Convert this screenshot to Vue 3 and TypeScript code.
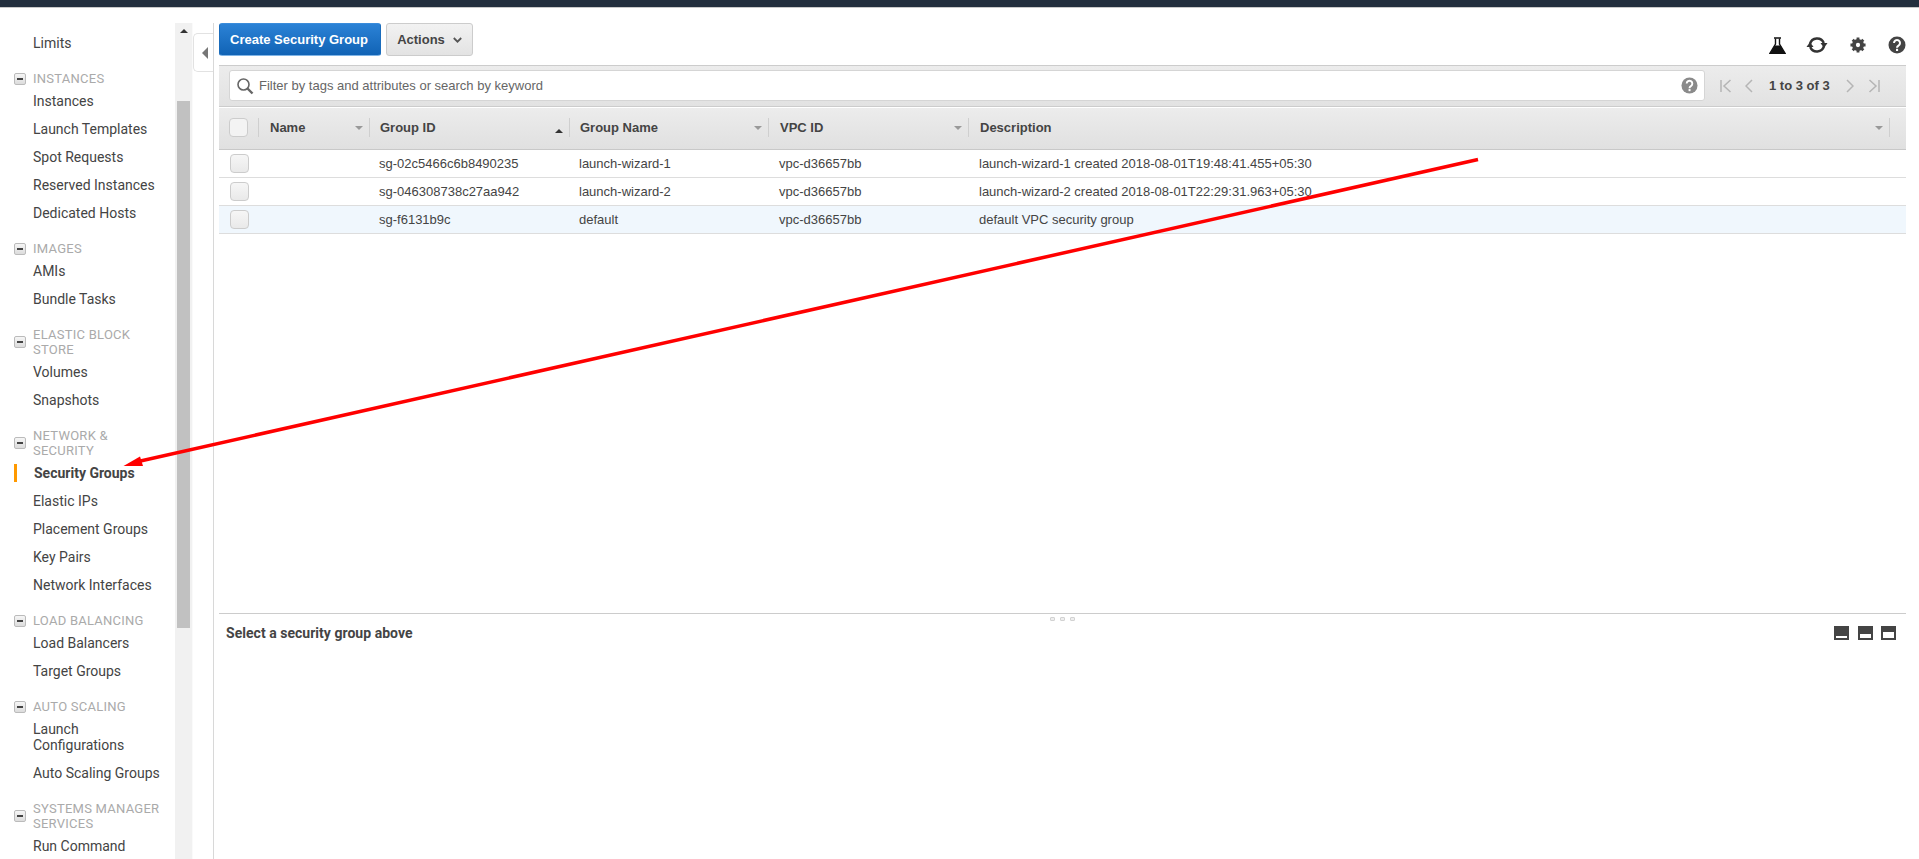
<script setup lang="ts">
interface NavItem { label: string; active?: boolean }
interface NavGroup { title?: string; items: NavItem[] }
const groups: NavGroup[] = [
  { items: [{ label: 'Limits' }] },
  { title: 'INSTANCES', items: ['Instances', 'Launch Templates', 'Spot Requests', 'Reserved Instances', 'Dedicated Hosts'].map(label => ({ label })) },
  { title: 'IMAGES', items: ['AMIs', 'Bundle Tasks'].map(label => ({ label })) },
  { title: 'ELASTIC BLOCK STORE', items: ['Volumes', 'Snapshots'].map(label => ({ label })) },
  { title: 'NETWORK & SECURITY', items: [{ label: 'Security Groups', active: true }, { label: 'Elastic IPs' }, { label: 'Placement Groups' }, { label: 'Key Pairs' }, { label: 'Network Interfaces' }] },
  { title: 'LOAD BALANCING', items: ['Load Balancers', 'Target Groups'].map(label => ({ label })) },
  { title: 'AUTO SCALING', items: ['Launch Configurations', 'Auto Scaling Groups'].map(label => ({ label })) },
  { title: 'SYSTEMS MANAGER SERVICES', items: ['Run Command'].map(label => ({ label })) },
]
const columns = [
  { label: 'Name', sort: 'down' },
  { label: 'Group ID', sort: 'up' },
  { label: 'Group Name', sort: 'down' },
  { label: 'VPC ID', sort: 'down' },
  { label: 'Description', sort: 'down' },
]
const rows = [
  { id: 'sg-02c5466c6b8490235', name: 'launch-wizard-1', vpc: 'vpc-d36657bb', desc: 'launch-wizard-1 created 2018-08-01T19:48:41.455+05:30' },
  { id: 'sg-046308738c27aa942', name: 'launch-wizard-2', vpc: 'vpc-d36657bb', desc: 'launch-wizard-2 created 2018-08-01T22:29:31.963+05:30' },
  { id: 'sg-f6131b9c', name: 'default', vpc: 'vpc-d36657bb', desc: 'default VPC security group', selected: true },
]
</script>

<template>
  <div class="app">
    <div class="topbar"></div>
    <div class="body">
      <nav class="nav">
        <div v-for="(g, i) in groups" :key="i" class="group">
          <div v-if="g.title" class="heading">
            <span class="minus"><i></i></span>
            <span class="heading-text">{{ g.title }}</span>
          </div>
          <a v-for="item in g.items" :key="item.label" class="item" :class="{ active: item.active }">{{ item.label }}</a>
        </div>
      </nav>
      <div class="track">
        <div class="up"></div>
        <div class="thumb"></div>
      </div>
      <div class="collapse-col">
        <div class="tab"><span class="tab-arrow"></span></div>
      </div>
      <main class="main">
        <div class="toolbar">
          <button class="btn primary">Create Security Group</button>
          <button class="btn secondary">Actions
            <svg class="chev" width="9" height="6" viewBox="0 0 9 6"><path d="M.8 1 4.500 4.700 8.200 1" fill="none" stroke="#555" stroke-width="1.800"/></svg>
          </button>
          <div class="tools">
            <svg class="flask" width="17" height="17" viewBox="0 0 17 17"><path d="M5 1h7" stroke="#111" stroke-width="1.500"/><path d="M6.500 1.500v5.500L1 16.200h15L10.500 7V1.500" fill="none" stroke="#111" stroke-width="1.400"/><path d="M5.500 8.500h6L16 16.500H1z" fill="#111"/></svg>
            <svg class="refresh" width="22" height="18" viewBox="0 0 22 18"><path d="M4 8A7.300 7.300 0 0 1 17.800 7" fill="none" stroke="#333" stroke-width="2.500"/><path d="M14.500 7h7L18 12z" fill="#333"/><path d="M18 10A7.300 7.300 0 0 1 4.200 11" fill="none" stroke="#333" stroke-width="2.500"/><path d="M7.500 11h-7L4 6z" fill="#333"/></svg>
            <svg class="gear" width="16" height="16" viewBox="0 0 18 18"><circle cx="9" cy="9" r="5" fill="none" stroke="#444" stroke-width="3.600"/><path d="M9 .5v17M.5 9h17M3 3l12 12M15 3 3 15" stroke="#444" stroke-width="3.200"/><circle cx="9" cy="9" r="2.400" fill="#fff"/></svg>
            <svg class="help" width="18" height="18" viewBox="0 0 18 18"><circle cx="9" cy="9" r="8.500" fill="#444"/><path d="M6 7a3 3 0 1 1 4.500 2.600C9.500 10.200 9 10.800 9 11.800" fill="none" stroke="#fff" stroke-width="2"/><rect x="8" y="12.800" width="2.100" height="2.200" fill="#fff"/></svg>
          </div>
        </div>
        <div class="filterbar">
          <div class="search">
            <svg width="18" height="18" viewBox="0 0 18 18"><circle cx="7.500" cy="7.500" r="5.500" fill="none" stroke="#666" stroke-width="1.600"/><path d="M11.500 11.500 16.500 16.500" stroke="#666" stroke-width="2.400"/></svg>
            <span class="placeholder">Filter by tags and attributes or search by keyword</span>
            <svg width="17" height="17" viewBox="0 0 18 18"><circle cx="9" cy="9" r="8.500" fill="#8a8a8a"/><path d="M6 7a3 3 0 1 1 4.500 2.600C9.500 10.200 9 10.800 9 11.800" fill="none" stroke="#fff" stroke-width="2"/><rect x="8" y="12.800" width="2.100" height="2.200" fill="#fff"/></svg>
          </div>
          <div class="pager">
            <svg width="12" height="14" viewBox="0 0 12 14"><path d="M1 1v12M10.500 1 4 7l6.500 6" fill="none" stroke="#b5b5b5" stroke-width="1.500"/></svg>
            <svg width="8" height="14" viewBox="0 0 8 14"><path d="M7 1 1 7l6 6" fill="none" stroke="#b5b5b5" stroke-width="1.500"/></svg>
            <span class="count">1 to 3 of 3</span>
            <svg width="8" height="14" viewBox="0 0 8 14"><path d="M1 1l6 6-6 6" fill="none" stroke="#b5b5b5" stroke-width="1.500"/></svg>
            <svg width="12" height="14" viewBox="0 0 12 14"><path d="M11 1v12M1.500 1 8 7l-6.500 6" fill="none" stroke="#b5b5b5" stroke-width="1.500"/></svg>
          </div>
        </div>
        <div class="table">
          <div class="thead grid">
            <div class="cell-check"><span class="check head-check"></span></div>
            <div v-for="c in columns" :key="c.label" class="th">
              <span>{{ c.label }}</span>
              <span class="sort" :class="c.sort"></span>
            </div>
            <div class="th tail"></div>
          </div>
          <div v-for="r in rows" :key="r.id" class="tr grid" :class="{ selected: r.selected }">
            <div class="cell-check"><span class="check"></span></div>
            <div class="td"></div>
            <div class="td">{{ r.id }}</div>
            <div class="td">{{ r.name }}</div>
            <div class="td">{{ r.vpc }}</div>
            <div class="td">{{ r.desc }}</div>
            <div></div>
          </div>
        </div>
        <div class="detail">
          <div class="dots"><i></i><i></i><i></i></div>
          <div class="detail-head">
            <span class="detail-title">Select a security group above</span>
            <div class="panes">
              <span class="pane p1"><i></i></span>
              <span class="pane p2"><i></i></span>
              <span class="pane p3"><i></i></span>
            </div>
          </div>
        </div>
      </main>
    </div>
    <svg class="annot" width="1919" height="859" viewBox="0 0 1919 859">
      <path d="M1478 159.500 136 462" stroke="#f00" stroke-width="3.500" fill="none"/>
      <path d="M123.500 466 140 456.500 143 466z" fill="#f00"/>
    </svg>
  </div>
</template>

<style>
html, body { margin: 0; padding: 0; overflow: hidden; background: #fff; }
</style>

<style scoped>
.app { position: relative; width: 1919px; height: 859px; overflow: hidden; display: flex; flex-direction: column; background: #fff; font-family: "Liberation Sans", Arial, sans-serif; }
.topbar { height: 7px; flex: none; background: #232f3e; border-bottom: 1px solid #c9c9c9; }
.body { flex: 1; display: flex; min-height: 0; }

.nav { width: 175px; flex: none; padding-top: 21px; box-sizing: border-box; overflow: hidden; font-family: Roboto, sans-serif; }
.heading { position: relative; box-sizing: border-box; padding: 14px 14px 1px 33px; display: flex; align-items: center; }
.heading-text { font-size: 13px; line-height: 15px; color: #aaa; letter-spacing: 0.25px; }
.minus { position: absolute; left: 14px; top: calc(50% + 6.5px); transform: translateY(-50%); width: 10px; height: 10px; border: 1px solid #bbb; border-radius: 2px; background: linear-gradient(#f6f6f6, #dcdcdc); display: flex; align-items: center; justify-content: center; }
.minus i { width: 6px; height: 2px; background: #444; display: block; }
.item { display: block; position: relative; padding: 6px 14px 6px 33px; font-size: 14px; line-height: 16px; color: #444; }
.item.active { font-weight: 700; padding-left: 34px; color: #444; }
.item.active::before { content: ""; position: absolute; left: 14px; top: 5px; width: 3px; height: 18px; background: #f90; }

.track { width: 18px; flex: none; margin-top: 15px; background: #f1f1f1; border-right: 1px solid #fafafa; box-sizing: border-box; position: relative; display: flex; flex-direction: column; align-items: center; }
.up { width: 0; height: 0; margin-top: 6px; border-left: 4px solid transparent; border-right: 4px solid transparent; border-bottom: 4px solid #333; }
.thumb { margin-top: 68px; width: 13px; height: 527px; background: #c1c1c1; }

.collapse-col { width: 20px; flex: none; padding-top: 25px; box-sizing: border-box; }
.tab { width: 21px; height: 39px; box-sizing: border-box; border: 1px solid #e2e2e2; border-right: 0; border-radius: 5px 0 0 5px; background: #fff; display: flex; align-items: center; padding-left: 8px; }
.tab-arrow { width: 0; height: 0; border-top: 6px solid transparent; border-bottom: 6px solid transparent; border-right: 6px solid #777; }

.main { flex: 1; min-width: 0; margin-top: 15px; border-left: 1.5px solid #d8d8d8; padding: 0 13px 0 5px; display: flex; flex-direction: column; }
.toolbar { height: 33px; flex: none; display: flex; align-items: flex-start; gap: 5px; margin-bottom: 9px; position: relative; }
.btn { box-sizing: border-box; height: 33px; font: 700 13px "Liberation Sans", Arial, sans-serif; border-radius: 3px; padding: 0; }
.primary { width: 162px; padding-right: 2px; color: #fff; background: linear-gradient(#2b82d6, #1163b5); border: 1px solid #7fb4e6; border-color: #3a8cdb #1a6cbc #7fb4e6; }
.secondary { width: 87px; color: #444; background: linear-gradient(#f2f2f2, #e3e3e3); border: 1px solid #ccc; display: flex; align-items: center; justify-content: center; gap: 8px; }
.tools { position: absolute; right: 0; top: 13px; display: flex; align-items: center; }
.refresh { margin-left: 20px; }
.gear { margin-left: 22px; }
.help { margin-left: 22px; }

.filterbar { flex: none; height: 42px; box-sizing: border-box; background: linear-gradient(#ececec, #e2e2e2); border-top: 1px solid #ccc; border-bottom: 1px solid #ccc; padding: 4px 0 0 10px; display: flex; }
.search { width: 1476px; height: 31px; box-sizing: border-box; background: #fff; border: 1px solid #d5d5d5; border-radius: 3px; display: flex; align-items: center; padding: 0 6px; gap: 5px; }
.placeholder { font-size: 13px; color: #666; flex: 1; }
.pager { display: flex; align-items: center; height: 31px; padding-left: 15px; }
.pager svg:nth-child(2) { margin-left: 13px; }
.pager svg:nth-child(5) { margin-left: 14px; }
.count { font-size: 13px; font-weight: 700; color: #444; padding: 0 16px; }

.grid { display: grid; grid-template-columns: 39px 111px 200px 199px 200px 921px 17px; }
.thead { height: 42px; box-sizing: border-box; margin-top: 1px; padding-bottom: 2px; background: linear-gradient(#ececec, #e0e0e0); border-bottom: 1px solid #c8c8c8; align-items: center; }
.cell-check { display: flex; align-items: center; padding-left: 11px; height: 100%; }
.th { height: 19px; border-left: 1px solid #cfcfcf; padding: 0 6px 0 11px; display: flex; align-items: center; justify-content: space-between; font-size: 13px; font-weight: 700; color: #444; box-sizing: border-box; }
.th:nth-child(3), .th:nth-child(4) { padding-left: 10px; }
.sort { width: 0; height: 0; border-left: 4px solid transparent; border-right: 4px solid transparent; }
.sort.down { border-top: 4px solid #999; }
.sort.up { border-bottom: 4px solid #333; }
.tail { padding: 0; }
.tr { height: 28px; box-sizing: border-box; border-bottom: 1px solid #ddd; align-items: center; font-size: 13px; color: #444; }
.tr.selected { background: #f0f7fd; }
.td { padding-left: 10px; white-space: nowrap; }
.td:nth-child(5), .td:nth-child(6) { padding-left: 11px; }
.check { display: block; width: 19px; height: 19px; box-sizing: border-box; border: 1px solid #ccc; border-radius: 4px; background: linear-gradient(#f6f6f6, #e9e9e9); }
.head-check { margin-left: -1px; background: #f3f3f3; }

.table { flex: 1; min-height: 0; }
.detail { flex: none; height: 246px; box-sizing: border-box; border-top: 1.5px solid #ccc; position: relative; }
.dots { position: absolute; left: 831px; top: 3px; display: flex; gap: 5px; }
.dots i { display: block; width: 5px; height: 4px; box-sizing: border-box; border: 1px solid #d2d2d2; border-radius: 1px; background: #eee; }
.detail-head { display: flex; justify-content: space-between; align-items: center; padding: 11px 10px 0 7px; }
.detail-title { font: 700 14px/16px Roboto, sans-serif; color: #444; letter-spacing: 0.03px; }
.panes { display: flex; gap: 9px; }
.pane { position: relative; display: block; width: 15px; height: 14px; background: #444; }
.pane i { position: absolute; display: block; left: 2px; right: 2px; bottom: 2px; background: #fff; }
.p1 { left: 1px; }
.p2 { left: 1px; }
.p1 i { height: 2px; }
.p2 i { height: 4px; }
.p3 i { height: 6px; }

.annot { position: absolute; left: 0; top: 0; pointer-events: none; }
</style>
